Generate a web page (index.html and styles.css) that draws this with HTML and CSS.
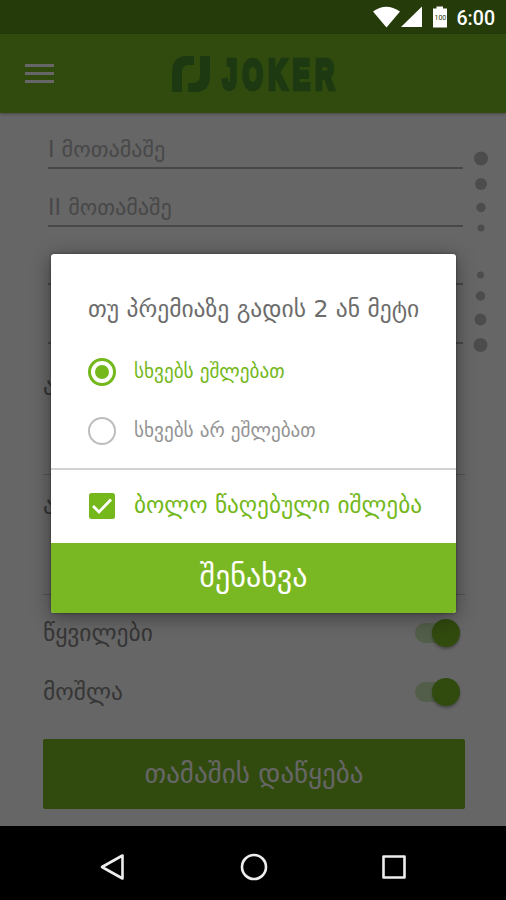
FILE: index.html
```
<!DOCTYPE html>
<html lang="ka">
<head>
    <meta charset="UTF-8">
    <meta name="viewport" content="width=device-width, initial-scale=1.0">
    <title>Joker</title>
    <link rel="stylesheet" href="styles.css">
</head>
<body>
<div class="status-bar">
    <div class="status-icons">
        <svg width="128" height="34" viewBox="0 0 128 34">
            <path d="M0 11.500Q13 2 27 11.500L13.500 27.500Z" fill="#fff"/>
            <path d="M28 27H49V6.500Z" fill="#fff"/>
            <path d="M60 8.500H63.500V6.500H70V8.500H74V27.500H60Z" fill="#fff"/>
            <text class="battery-text" x="61.500" y="19.500">100</text>
            <text class="clock" x="83.500" y="25" textLength="38.500" lengthAdjust="spacingAndGlyphs">6:00</text>
        </svg>
    </div>
</div>
<header>
    <button class="menu-button">
        <span></span>
        <span></span>
        <span></span>
    </button>
    <svg class="logo" width="166" height="40" viewBox="0 0 166 40">
        <path d="M0 38V18Q0 2 15 2H22V11H17Q10 11 10 18V38Z"/>
        <path d="M28 2H38V22Q38 38 23 38H16V29H21Q28 29 28 21Z"/>
        <text class="logo-text" x="50.500" y="34.500" textLength="117" lengthAdjust="spacingAndGlyphs">JOKER</text>
    </svg>
</header>
<main>
    <div class="players">
        <div class="fields">
            <div class="field">I მოთამაშე</div>
            <div class="field">II მოთამაშე</div>
            <div class="field"></div>
            <div class="field"></div>
        </div>
        <svg class="dots" width="16" height="231" viewBox="0 0 16 231">
            <circle cx="8" cy="45.500" r="7"/>
            <circle cx="8" cy="71" r="6"/>
            <circle cx="8" cy="94.500" r="4.700"/>
            <circle cx="8" cy="115" r="3.500"/>
            <circle cx="7.500" cy="162" r="3.500"/>
            <circle cx="7.500" cy="183" r="4.700"/>
            <circle cx="7.500" cy="206.500" r="6"/>
            <circle cx="7.500" cy="232" r="7"/>
        </svg>
    </div>
    <div class="setting">ა</div>
    <div class="setting second">ა</div>
    <div class="switch-row">
        <span class="switch-label">წყვილები</span>
        <span class="switch"></span>
    </div>
    <div class="switch-row">
        <span class="switch-label">მოშლა</span>
        <span class="switch"></span>
    </div>
    <button class="start-button">თამაშის დაწყება</button>
</main>
<div class="overlay"></div>
<div class="dialog">
    <h2>თუ პრემიაზე გადის 2 ან მეტი</h2>
    <div class="option selected">
        <span class="radio"></span>
        <span class="option-text">სხვებს ეშლებათ</span>
    </div>
    <div class="option">
        <span class="radio"></span>
        <span class="option-text">სხვებს არ ეშლებათ</span>
    </div>
    <div class="check-row">
        <svg width="26" height="26" viewBox="0 0 26 26">
            <rect width="26" height="26" rx="2.500" fill="#74b81c"/>
            <path d="M4 13L10 19L22 6.500" fill="none" stroke="#fff" stroke-width="2.800"/>
        </svg>
        <span class="check-text">ბოლო წაღებული იშლება</span>
    </div>
    <button class="save-button">შენახვა</button>
</div>
<nav>
    <svg width="28" height="30" viewBox="0 0 28 30">
        <path d="M3 15L23.500 3.500V26.500Z"/>
    </svg>
    <svg width="28" height="30" viewBox="0 0 28 30">
        <circle cx="14" cy="15" r="12"/>
    </svg>
    <svg width="28" height="30" viewBox="0 0 28 30">
        <rect x="3.500" y="4.500" width="21" height="21"/>
    </svg>
</nav>
</body>
</html>
```
FILE: styles.css
```
* {
    box-sizing: border-box;
}

body {
    position: relative;
    display: flex;
    flex-direction: column;
    width: 506px;
    height: 900px;
    margin: 0;
    background: #FFFFFF;
    overflow: hidden;
    font-family: 'DejaVu Sans', sans-serif;
}

button {
    border: none;
    padding: 0;
    font-family: inherit;
    cursor: pointer;
}

.status-bar {
    display: flex;
    justify-content: flex-end;
    height: 34px;
    background: #5F941B;
}

.status-icons {
    position: relative;
    z-index: 2;
    width: 133px;
    height: 34px;
}

.battery-text {
    font-family: Roboto, sans-serif;
    font-size: 7px;
    fill: #263B0B;
}

.clock {
    font-family: Roboto, sans-serif;
    font-size: 20px;
    font-weight: 500;
    fill: #FFFFFF;
}

header {
    display: flex;
    align-items: center;
    height: 79px;
    padding-left: 25px;
    background: #7AB823;
    box-shadow: 0 1px 3px rgba(0, 0, 0, 0.3);
}

.menu-button {
    display: flex;
    flex-direction: column;
    gap: 5px;
    width: 29px;
    background: none;
}

.menu-button span {
    height: 3px;
    background: #FFFFFF;
}

.logo {
    margin-left: 118px;
    overflow: visible;
    fill: #46902D;
}

.logo-text {
    font-family: 'Liberation Sans', sans-serif;
    font-size: 42px;
    font-weight: 700;
    letter-spacing: 9px;
    stroke: #46902D;
    stroke-width: 4.5px;
}

main {
    height: 713px;
    padding: 0 41px 0 43px;
}

.players {
    display: flex;
    gap: 10px;
    width: 446px;
    padding-left: 5px;
}

.fields {
    width: 415px;
}

.field {
    height: 58px;
    padding-top: 24px;
    border-bottom: 2px solid #B5B5B5;
    color: #B4B4B4;
    font-size: 22.2px;
    line-height: 28px;
}

.field:first-child {
    height: 56px;
    padding-top: 22px;
}

.field:nth-child(4) {
    height: 59px;
}

.dots {
    overflow: visible;
    fill: #BEBEBE;
}

.setting {
    height: 131px;
    padding-top: 29px;
    border-bottom: 1px solid #CDCDCD;
    color: #808080;
    font-size: 23.5px;
    line-height: 28px;
}

.setting.second {
    height: 120px;
    padding-top: 17px;
}

.switch-row {
    display: flex;
    justify-content: space-between;
    height: 59px;
    padding: 24px 5px 0 0;
}

.switch-label {
    color: #888888;
    font-size: 23.5px;
    line-height: 28px;
}

.switch {
    display: flex;
    justify-content: flex-end;
    align-items: center;
    width: 45px;
    height: 20px;
    margin-top: 4px;
    border-radius: 10px;
    background: #CFEBB8;
}

.switch::after {
    content: "";
    width: 28px;
    height: 28px;
    border-radius: 50%;
    background: #7AB823;
    box-shadow: 0 2px 3px rgba(0, 0, 0, 0.3);
}

.start-button {
    width: 422px;
    height: 70px;
    margin-top: 26px;
    padding-bottom: 2px;
    border-radius: 2px;
    background: #7AB823;
    color: #FFFFFF;
    font-size: 27px;
}

.overlay {
    position: absolute;
    left: 0;
    top: 0;
    width: 506px;
    height: 826px;
    background: rgba(0, 0, 0, 0.6);
}

.dialog {
    position: absolute;
    left: 51px;
    top: 254px;
    width: 405px;
    height: 359px;
    border-radius: 3px;
    background: #FFFFFF;
    box-shadow: 0 4px 20px rgba(0, 0, 0, 0.4), 0 0 3px rgba(0, 0, 0, 0.4);
    overflow: hidden;
}

.dialog h2 {
    height: 88px;
    margin: 0;
    padding: 41px 0 0 37px;
    color: #6C6C6C;
    font-size: 23.5px;
    font-weight: 400;
    line-height: 28px;
    white-space: nowrap;
}

.option {
    display: flex;
    align-items: center;
    height: 59px;
    padding-left: 37px;
    color: #949494;
}

.option-text {
    margin-left: 18px;
    font-size: 19.2px;
    white-space: nowrap;
}

.radio {
    display: flex;
    align-items: center;
    justify-content: center;
    width: 28px;
    height: 28px;
    border: 2.5px solid #BDBDBD;
    border-radius: 50%;
}

.selected {
    color: #74B81C;
}

.selected .radio {
    border: 3px solid #74B81C;
}

.selected .radio::after {
    content: "";
    width: 14px;
    height: 14px;
    border-radius: 50%;
    background: #74B81C;
}

.check-row {
    display: flex;
    align-items: center;
    height: 75px;
    margin-top: 8px;
    padding: 0 0 2px 38px;
    border-top: 2px solid #D2D2D2;
    color: #74B81C;
}

.check-text {
    margin-left: 19px;
    padding-bottom: 2px;
    font-size: 23.3px;
    white-space: nowrap;
}

.save-button {
    display: block;
    width: 405px;
    height: 70px;
    padding-bottom: 3px;
    background: #7AB823;
    color: #FFFFFF;
    font-size: 30px;
}

nav {
    display: flex;
    align-items: center;
    justify-content: center;
    gap: 112.5px;
    height: 74px;
    padding: 7px 0 0 1px;
    background: #000000;
}

nav svg {
    fill: none;
    stroke: #EEEEEE;
    stroke-width: 2.6px;
    stroke-linejoin: round;
}
```
